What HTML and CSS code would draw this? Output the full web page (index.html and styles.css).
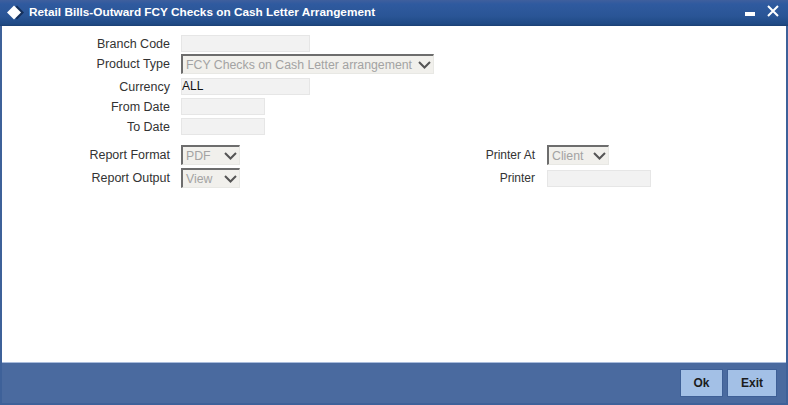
FILE: index.html
```html
<!DOCTYPE html>
<html lang="en">
<head>
<meta charset="utf-8">
<title>Retail Bills-Outward FCY Checks on Cash Letter Arrangement</title>
<link rel="stylesheet" href="styles.css">
</head>
<body>
<div class="window">
  <header class="titlebar">
    <svg class="diamond" width="18" height="16" viewBox="0 0 18 16"><path d="M11 0.500 18 7.500 11 14.500 4 7.500Z" fill="#15305c"/><path d="M8 0.500 15 7.500 8 14.500 1 7.500Z" fill="#fff"/></svg>
    <h1 class="title">Retail Bills-Outward FCY Checks on Cash Letter Arrangement</h1>
    <div class="controls">
      <span class="min"></span>
      <svg class="close" width="12" height="12" viewBox="0 0 12 12"><path d="M1 1 11 11M11 1 1 11" stroke="#fff" stroke-width="2" fill="none"/></svg>
    </div>
  </header>
  <main class="body">
    <section class="top">
      <div class="row r-first"><span class="label">Branch Code</span><span class="input wide"></span></div>
      <div class="row r-select"><span class="label">Product Type</span><span class="select s-product"><span class="sval">FCY Checks on Cash Letter arrangement</span><svg class="chev" width="13" height="8" viewBox="0 0 13 8"><path d="M1 1 6.500 6.500 12 1" stroke="#555" stroke-width="2" fill="none"/></svg></span></div>
      <div class="row r-input"><span class="label">Currency</span><span class="input wide filled">ALL</span></div>
      <div class="row r-input"><span class="label">From Date</span><span class="input short"></span></div>
      <div class="row r-input"><span class="label">To Date</span><span class="input short"></span></div>
    </section>
    <section class="bottom">
      <div class="col">
        <div class="row r-select"><span class="label">Report Format</span><span class="select s-small"><span class="sval">PDF</span><svg class="chev" width="13" height="8" viewBox="0 0 13 8"><path d="M1 1 6.500 6.500 12 1" stroke="#555" stroke-width="2" fill="none"/></svg></span></div>
        <div class="row r-select"><span class="label">Report Output</span><span class="select s-small"><span class="sval">View</span><svg class="chev" width="13" height="8" viewBox="0 0 13 8"><path d="M1 1 6.500 6.500 12 1" stroke="#555" stroke-width="2" fill="none"/></svg></span></div>
      </div>
      <div class="col col-right">
        <div class="row r-select"><span class="label label-r">Printer At</span><span class="select s-client"><span class="sval">Client</span><svg class="chev" width="13" height="8" viewBox="0 0 13 8"><path d="M1 1 6.500 6.500 12 1" stroke="#555" stroke-width="2" fill="none"/></svg></span></div>
        <div class="row r-select"><span class="label label-r">Printer</span><span class="input printer"></span></div>
      </div>
    </section>
  </main>
  <footer class="footer">
    <button class="btn" type="button">Ok</button>
    <button class="btn" type="button">Exit</button>
  </footer>
</div>
</body>
</html>
```
FILE: styles.css
```css
* { box-sizing: border-box; }
html, body { margin: 0; padding: 0; }
body { width: 788px; height: 405px; overflow: hidden; font-family: "Liberation Sans", Arial, sans-serif; font-size: 12.500px; color: #222; }
.window { width: 788px; height: 405px; display: flex; flex-direction: column; background: #3e6199; }
.titlebar { height: 26px; flex: none; display: flex; align-items: center; padding: 0 2px 2px 6px; background: linear-gradient(#3f5f9d 0, #2f5a9f 4px, #2a5596 16px, #1f4a85 24px, #1b3f73 26px); color: #fff; }
.diamond { flex: none; margin-top: 2px; }
.title { margin: 0 0 0 5px; font-size: 11.800px; font-weight: bold; color: #fff; white-space: nowrap; flex: 1; }
.controls { display: flex; align-items: flex-start; gap: 12px; height: 18px; padding-right: 7px; }
.min { width: 10px; height: 4px; margin-top: 9px; background: #fff; }
.close { margin-top: 2px; }
.body { flex: 1; background: #fff; margin: 0 2px; padding-top: 9px; min-height: 0; }
.row { display: flex; align-items: center; }
.label { width: 168px; text-align: right; margin-right: 11px; color: #333; }
.r-first, .r-input { height: 17px; }
.r-select { height: 20px; }
.r-first + .r-select { margin-top: 2px; margin-bottom: 4px; }
.r-input + .r-input { margin-top: 3px; }
.input { display: block; height: 17px; background: #f2f2f2; border: 1px solid #e6e6e6; color: #111; line-height: 15px; font-size: 12px; }
.wide { width: 129px; }
.short { width: 84px; }
.select { display: flex; align-items: center; justify-content: space-between; height: 20px; background: #f1f0ec; border-top: 2px solid #6d6d6d; border-left: 2px solid #6d6d6d; border-right: 1px solid #e8e8e4; border-bottom: 1px solid #e8e8e4; padding: 0 2px 0 3px; color: #a3a3a3; }
.s-product { width: 253px; }
.s-small { width: 59px; }
.s-client { width: 62px; }
.sval { font-size: 12.300px; white-space: nowrap; }
.chev { flex: none; }
.bottom { display: flex; margin-top: 10px; }
.bottom .r-select + .r-select { margin-top: 3px; }
.col { width: 366px; }
.col-right { width: auto; }
.label-r { width: 167px; margin-right: 12px; font-size: 12px; }
.printer { width: 104px; }
.footer { height: 41px; flex: none; display: flex; justify-content: flex-end; align-items: flex-start; gap: 4px; padding: 6px 9px 0 0; background: #4a6a9f; border-top: 1px solid #a9bcdc; margin: 0 2px 2px; }
.btn { width: 43px; height: 28px; padding: 0; font-family: "Liberation Sans", Arial, sans-serif; font-size: 12px; font-weight: bold; color: #1c1c1c; background: #a3c0e6; border: 1px solid #3e5f96; }
.btn + .btn { width: 50px; }
```
